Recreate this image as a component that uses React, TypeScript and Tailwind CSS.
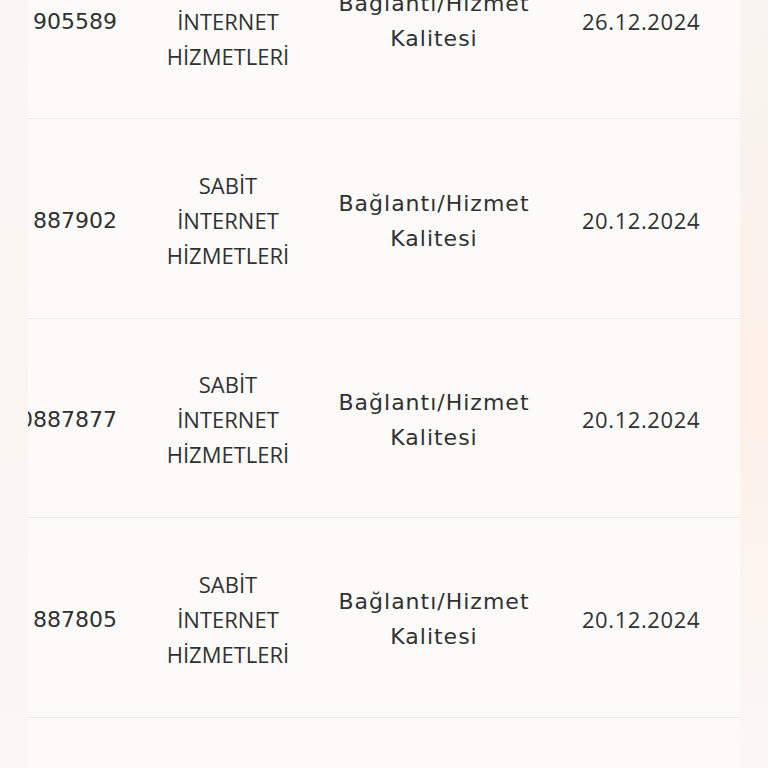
import React from "react";

type Row = { id: string; cat: string[]; topic: string[]; date: string };

const rows: Row[] = [
  { id: "905589", cat: ["SABİT", "İNTERNET", "HİZMETLERİ"], topic: ["Bağlantı/Hizmet", "Kalitesi"], date: "26.12.2024" },
  { id: "887902", cat: ["SABİT", "İNTERNET", "HİZMETLERİ"], topic: ["Bağlantı/Hizmet", "Kalitesi"], date: "20.12.2024" },
  { id: "0887877", cat: ["SABİT", "İNTERNET", "HİZMETLERİ"], topic: ["Bağlantı/Hizmet", "Kalitesi"], date: "20.12.2024" },
  { id: "887805", cat: ["SABİT", "İNTERNET", "HİZMETLERİ"], topic: ["Bağlantı/Hizmet", "Kalitesi"], date: "20.12.2024" },
  { id: "", cat: [], topic: [], date: "" },
];

const deja = { fontFamily: '"DejaVu Sans", "Open Sans", sans-serif' };
const open = { fontFamily: '"Open Sans", "Noto Sans", sans-serif' };

export default function App() {
  return (
    <div
      className="h-[768px] w-[768px] overflow-hidden flex bg-[#faf8f6] text-[#313131]"
      style={open}
    >
      <div className="w-[28px] shrink-0 bg-gradient-to-b from-[#f9f7f4] via-[#faf5f1] to-[#f9f8f6]" />
      <div className="w-[712px] shrink-0 overflow-hidden bg-[#fcfbfa]">
        <div className="mt-[-80px] w-[720px]">
          {rows.map((r, i) => (
            <div
              key={i}
              className="grid grid-cols-[97px_206px_206px_208px] items-center h-[199.4px] border-b border-[#ebebeb] text-[22px] leading-[35px] pt-[4px]"
            >
              <div className="flex justify-end pr-[8px] whitespace-nowrap" style={deja}>
                {r.id}
              </div>
              <div className="flex flex-col items-center text-center font-medium">
                {r.cat.map((c) => (
                  <span key={c}>{c}</span>
                ))}
              </div>
              <div className="flex flex-col items-center text-center tracking-[1px]" style={deja}>
                {r.topic.map((c) => (
                  <span key={c}>{c}</span>
                ))}
              </div>
              <div className="text-center font-medium tracking-[0.6px]">{r.date}</div>
            </div>
          ))}
        </div>
      </div>
      <div className="w-[28px] shrink-0 bg-gradient-to-b from-[#f7f5f0] via-[#fdf0e8] to-[#faf8f6]" />
    </div>
  );
}
